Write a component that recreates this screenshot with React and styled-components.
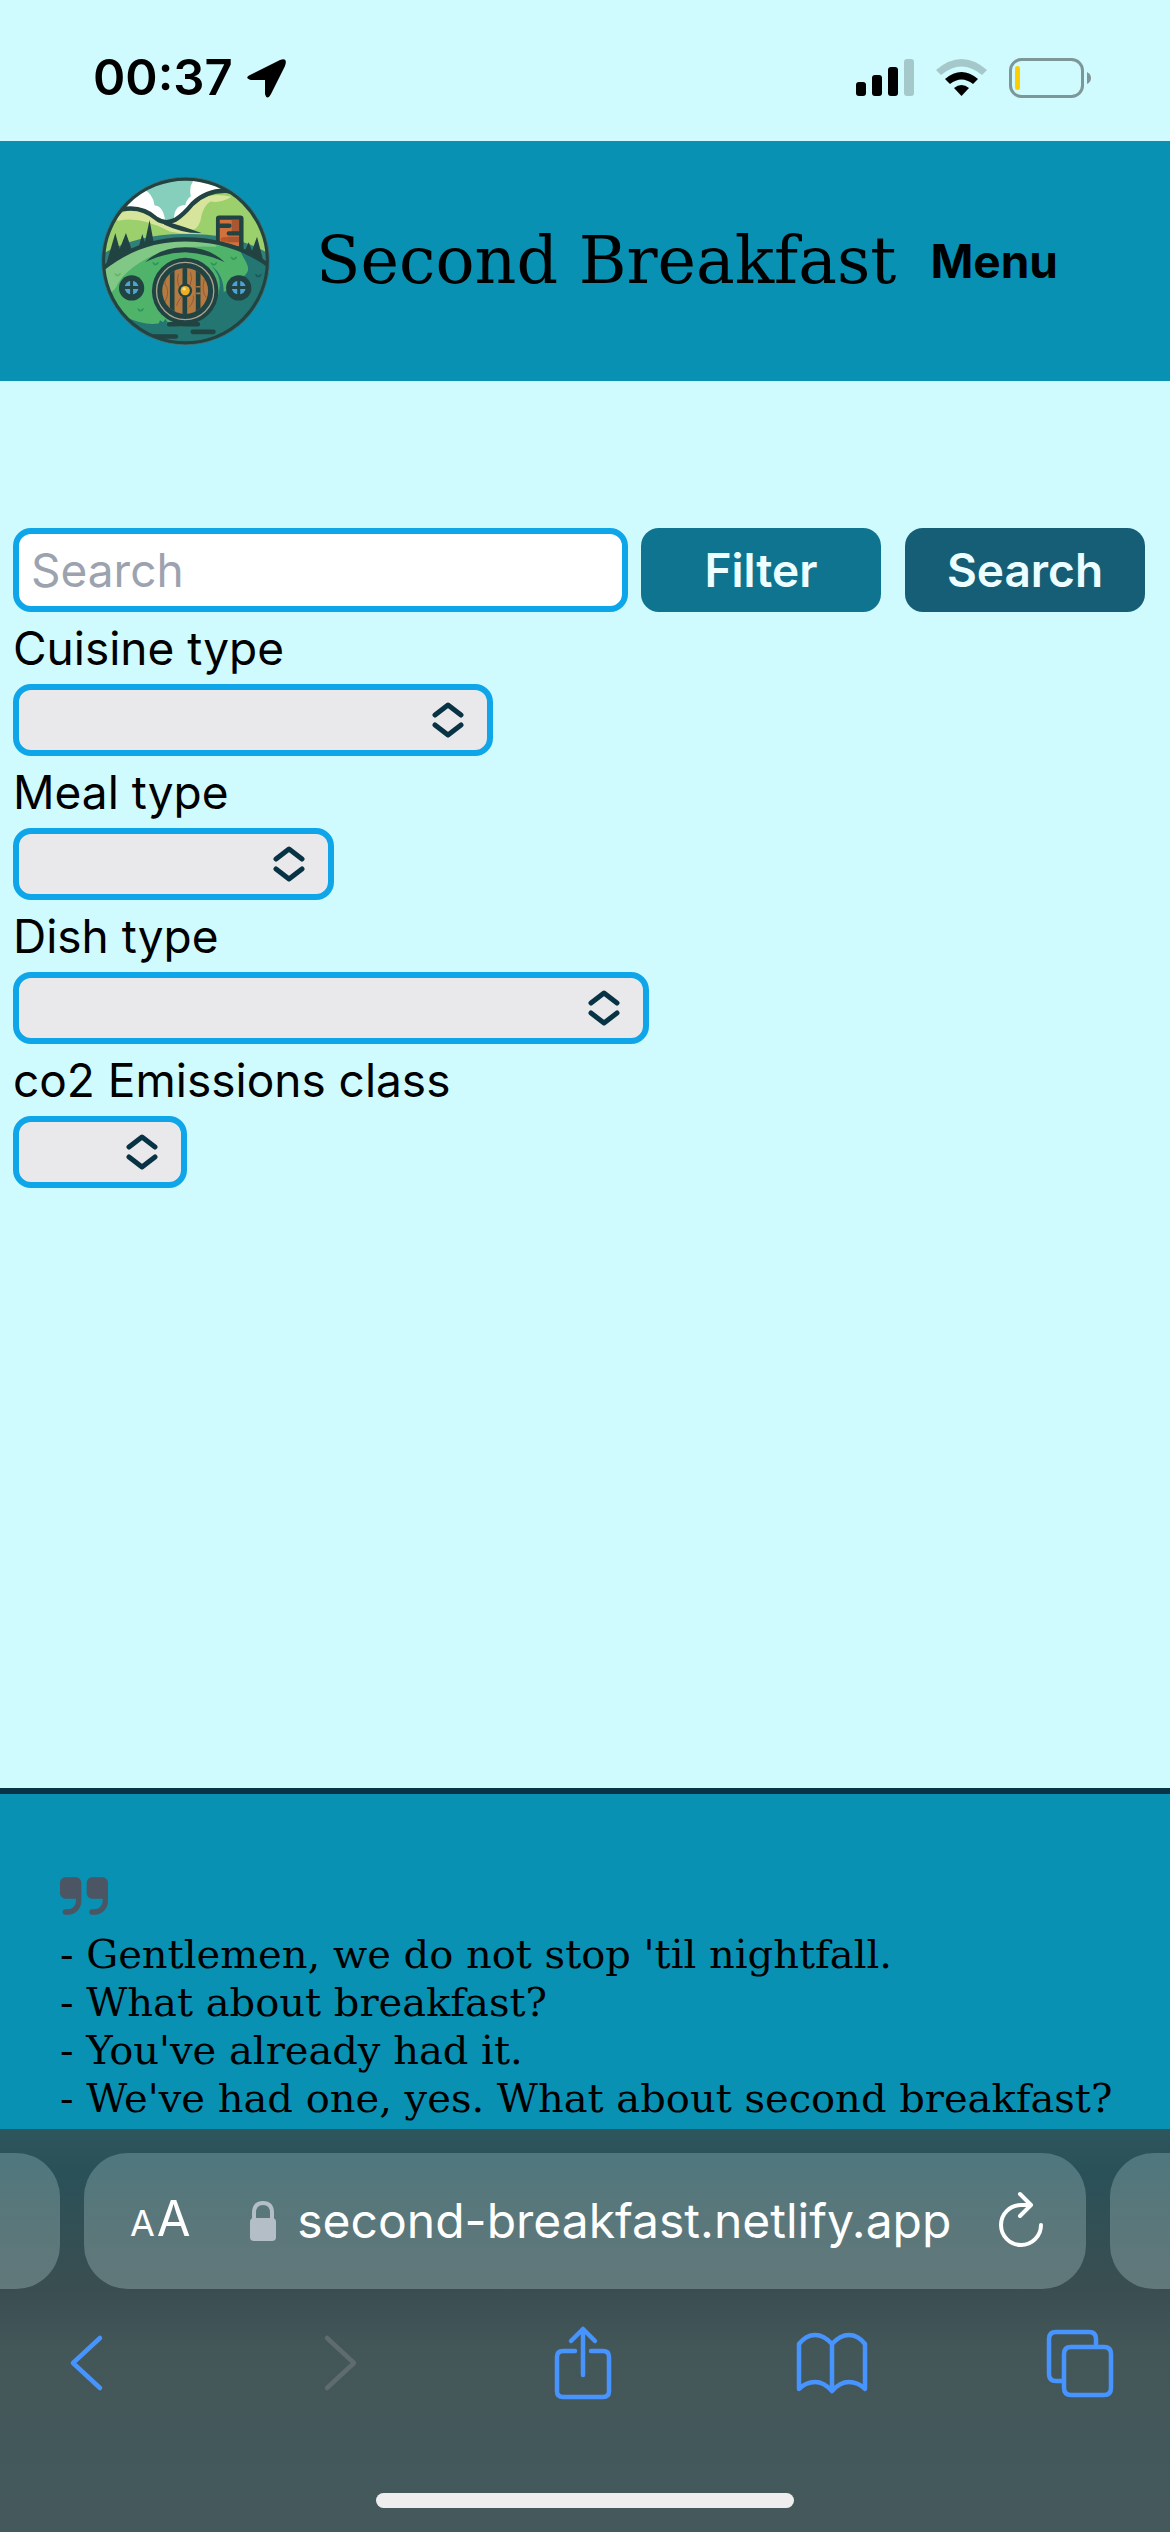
import React from "react";
import styled, { createGlobalStyle } from "styled-components";

const sans = '"Inter", "Liberation Sans", sans-serif';
const script = '"DejaVu Serif", serif';

const GlobalStyle = createGlobalStyle`
  *, *::before, *::after { box-sizing: border-box; }
  body { margin: 0; background: #cffafe; font-family: ${sans}; color: #000; }
  svg { display: block; flex: none; }
  button, input, select { font: inherit; margin: 0; }
  button { border: 0; background: none; padding: 0; cursor: pointer; }
`;

const Page = styled.div`
  display: flex;
  flex-direction: column;
  min-height: 100vh;
  overflow: hidden;
`;

const StatusBar = styled.div`
  display: flex;
  align-items: center;
  justify-content: space-between;
  height: 141px;
  padding: 15px 78px 0 93px;
`;

const StatusGroup = styled.div`
  display: flex;
  align-items: center;
  gap: ${(p) => p.$gap}px;
`;

const Clock = styled.time`
  font-size: 49px;
  line-height: 60px;
  font-weight: 600;
`;

const Header = styled.header`
  display: flex;
  align-items: center;
  justify-content: space-between;
  height: 240px;
  padding: 0 112px 0 101px;
  background: #0891b2;
`;

const Brand = styled.a`
  display: flex;
  align-items: center;
  gap: 46px;
  color: inherit;
  text-decoration: none;
`;

const Title = styled.h1`
  margin: 0;
  font-family: ${script};
  font-size: 65px;
  line-height: 72px;
  font-weight: 400;
  white-space: nowrap;
`;

const MenuButton = styled.button`
  font-size: 46px;
  line-height: 72px;
  font-weight: 700;
`;

const Main = styled.main`
  flex: 1;
  padding: 147px 25px 48px 13px;
`;

const SearchRow = styled.div`
  display: flex;
  gap: 24px;
`;

const SearchField = styled.input`
  flex: 1;
  min-width: 0;
  height: 84px;
  margin-right: -11px;
  padding: 0 12px;
  border: 6px solid #0ea5e9;
  border-radius: 18px;
  background: #fff;
  font-size: 46px;
  line-height: 72px;
  outline: 0;
  &::placeholder { color: #9ca3af; opacity: 1; }
`;

const ActionButton = styled.button`
  width: 240px;
  height: 84px;
  border-radius: 18px;
  background: ${(p) => (p.$strong ? "#155e75" : "#0e7490")};
  color: #ecfeff;
  font-size: 46px;
  line-height: 72px;
  font-weight: 600;
`;

const Field = styled.div`
  display: flex;
  flex-direction: column;
  align-items: flex-start;
`;

const FieldLabel = styled.label`
  font-size: 46px;
  line-height: 72px;
`;

const SelectBox = styled.div`
  display: grid;
  align-items: center;
  width: ${(p) => p.$width}px;
  max-width: 100%;
  & > * { grid-area: 1 / 1; }
  & > svg { justify-self: end; margin-right: 29px; pointer-events: none; }
`;

const Select = styled.select`
  appearance: none;
  width: 100%;
  height: 72px;
  padding: 0 72px 0 12px;
  border: 6px solid #0ea5e9;
  border-radius: 18px;
  background: #e9e9eb;
  color: #083344;
`;

const Footer = styled.footer`
  height: 341px;
  padding: 83px 60px 0;
  border-top: 6px solid #083344;
  background: #0891b2;
  overflow: hidden;
`;

const Quote = styled.blockquote`
  margin: 15px 0 0;
  font-family: ${script};
  font-size: 40px;
  line-height: 48px;
  white-space: nowrap;
`;

const QuoteLine = styled.p`
  margin: 0;
`;

const BrowserBar = styled.div`
  display: flex;
  flex-direction: column;
  height: 403px;
  padding-top: 24px;
  background: linear-gradient(#2e565d 0, #2a5158 40px, #3a4e51 160px, #435759 220px, #44595b 100%);
`;

const TabStrip = styled.div`
  display: flex;
  gap: 24px;
  height: 136px;
`;

const tabFill = "linear-gradient(#4f777e, #5a777b 50%, #62787a)";

const TabStub = styled.div`
  width: 60px;
  background: ${tabFill};
  border-radius: ${(p) => (p.$side === "left" ? "0 44px 44px 0" : "44px 0 0 44px")};
`;

const AddressBar = styled.div`
  flex: 1;
  display: flex;
  align-items: center;
  padding: 0 42px 0 46px;
  border-radius: 44px;
  background: ${tabFill};
  color: #fff;
`;

const TextSize = styled.button`
  display: flex;
  align-items: baseline;
  gap: 2px;
  color: #fff;
  line-height: 60px;
`;

const Letter = styled.span`
  font-size: ${(p) => (p.$big ? 49 : 36)}px;
`;

const Address = styled.div`
  flex: 1;
  display: flex;
  align-items: center;
  justify-content: center;
  gap: 20px;
  padding-left: 12px;
  font-size: 48px;
  line-height: 60px;
  white-space: nowrap;
`;

const Toolbar = styled.nav`
  display: flex;
  align-items: center;
  justify-content: space-between;
  height: 84px;
  margin-top: 32px;
  padding: 0 53px 0 49px;
  color: #4794ff;
`;

const IconButton = styled.button`
  color: inherit;
`;

const Tool = styled(IconButton)`
  display: flex;
  justify-content: center;
  width: 74px;
  &:disabled { color: #5e6c6e; }
`;

const HomeIndicator = styled.div`
  width: 418px;
  height: 15px;
  margin: auto auto 24px;
  border-radius: 8px;
  background: #eee;
`;

const LocationArrow = () => (
  <svg width="40" height="40" viewBox="0 0 40 40" aria-hidden="true">
    <path d="M3 17 33 2Q41-1 38 8L24 36Q20 43 18 36V22H4Q-3 20 3 17Z" />
  </svg>
);

const Signal = () => (
  <svg width="58" height="38" viewBox="0 0 58 38" aria-hidden="true">
    <rect y="23" width="10" height="14" rx="3" />
    <rect x="16" y="16" width="10" height="21" rx="3" />
    <rect x="32" y="8" width="10" height="29" rx="3" />
    <rect x="48" width="10" height="37" rx="3" fill="#a5c8cb" />
  </svg>
);

const Wifi = () => (
  <svg width="51" height="38" viewBox="0 0 51 38" aria-hidden="true">
    <path d="M0 11Q25.500-11 51 11L46 16Q25.500-1 5 16Z" fill="#a5c8cb" />
    <path d="M9 20Q25.500 6 42 20L37 25Q25.500 16 14 25Z" />
    <path d="M18 29Q25.500 23 33 29L25.500 37Z" />
  </svg>
);

const Battery = () => (
  <svg width="83" height="40" viewBox="0 0 83 40" aria-hidden="true">
    <rect x="1.500" y="1.500" width="72" height="37" rx="11" fill="none" stroke="#7d9698" strokeWidth="3" />
    <rect x="6" y="8" width="5" height="24" rx="2.500" fill="#ffcc00" />
    <path d="M78 14Q82 16 82 20T78 26Z" fill="#7d9698" />
  </svg>
);

const Tuft = ({ x, y, c = "#2d9558" }) => (
  <path d={`M${x - 10} ${y - 6}Q${x - 8} ${y + 5} ${x} ${y + 5}Q${x + 9} ${y + 4} ${x + 10} ${y - 6}Q${x + 2} ${y - 4} ${x} ${y + 1}Q${x - 3} ${y - 4} ${x - 10} ${y - 6}`} fill={c} />
);

const RoundWindow = ({ x }) => (
  <g>
    <circle cx={x} cy="372" r="38" fill="#214342" />
    <circle cx={x} cy="371" r="21" fill="#4aa5d6" />
    <path d={`M${x} 346v50M${x - 25} 371h50`} stroke="#214342" strokeWidth="9" />
  </g>
);

const Logo = () => (
  <svg width="169" height="170" viewBox="33 36 508 510" role="img" aria-label="Round green door in a hillside">
    <defs>
      <clipPath id="scene"><circle cx="287" cy="291" r="250" /></clipPath>
      <clipPath id="door"><circle cx="286" cy="381" r="69" /></clipPath>
    </defs>
    <g clipPath="url(#scene)">
      <path d="M33 36h508v510H33z" fill="#86cfbd" />
      <path d="M90 135 160 75Q190 88 194 124Q220 125 226 170H150L90 145Z" fill="#fff" />
      <path d="M310 50Q297 70 303 96Q287 108 287 123Q252 123 252 168L330 120 410 60V30Z" fill="#fff" />
      <path d="M30 150Q120 120 170 145Q225 170 330 207V290H30Z" fill="#9bd06c" />
      <path d="M70 165Q110 125 165 145Q240 185 330 207Q290 213 240 202Q150 155 85 170Z" fill="#d7e49c" />
      <path d="M235 180Q275 158 310 120Q370 68 450 95L550 240V300H330V207Z" fill="#9bd06c" />
      <path d="M240 180Q290 145 320 112Q360 82 425 98Q395 118 362 112Q338 125 332 170Q320 203 300 196Z" fill="#d7e49c" />
      <path d="M95 136Q155 124 200 164Q225 182 255 168Q280 153 307 120Q350 78 410 80Q440 85 465 100" fill="none" stroke="#214342" strokeWidth="13" />
      <path d="M225 171Q280 187 335 207Q280 209 222 181Z" fill="#214342" />
      <path d="M36 270Q150 208 286 210Q435 208 540 270V340H36Z" fill="#327f7a" />
      <path d="M48 303 76 207 89 255 108 207 128 265 145 255 157 210 165 235 179 168 194 250Z" fill="#214342" />
      <path d="M456 280 477 235 487 260 502 218 522 295 537 300V330Z" fill="#214342" />
      <rect x="383" y="159" width="74" height="104" rx="5" fill="#214342" stroke="#214342" strokeWidth="9" />
      <path d="M390 167h58v80H390z" fill="#d1713e" />
      <path d="M426 167h22v38H426zM412 218h36v17H412z" fill="#a95632" />
      <path d="M388 185h31M417 208h32" stroke="#214342" strokeWidth="13" strokeLinecap="round" />
      <ellipse cx="405" cy="226" rx="12" ry="7" fill="#b65629" />
      <path d="M390 235 430 243 448 248V269L390 244Z" fill="#214342" />
      <path d="M36 315Q150 230 286 228Q430 230 540 305V546H36Z" fill="#4fb46a" />
      <path d="M44 306Q160 233 290 232Q360 232 405 251Q285 238 190 274Q100 318 77 372L50 400Z" fill="#81c886" />
      <path d="M450 260Q480 320 465 335Q420 325 410 380L402 385Q401 330 365 306Q420 360 355 450Q290 510 220 475Q175 492 95 455L150 530 290 545 450 520 540 400V303Z" fill="#237671" />
      <path d="M360 300Q405 320 408 380L417 380Q420 335 460 335Q485 325 469 294L450 260 380 244Z" fill="#4fb46a" />
      <path d="M38 314Q150 225 286 226Q428 226 537 304" fill="none" stroke="#214342" strokeWidth="13" />
      <path d="M166 295Q210 250 286 250Q360 250 405 295Q350 268 286 265Q220 267 166 295Z" fill="#214342" />
      <Tuft x={197} y={299} /><Tuft x={372} y={300} /><Tuft x={432} y={283} />
      <Tuft x={152} y={438} /><Tuft x={83} y={332} c="#63b764" /><Tuft x={506} y={335} c="#195958" />
      <path d="M206 483 210 469 220 475 226 465 236 478Z" fill="#237671" />
      <RoundWindow x={125} />
      <RoundWindow x={447} />
      <path d="M238 481h86M309 504h62M175 518h83" stroke="#214342" strokeWidth="14" strokeLinecap="round" />
    </g>
    <circle cx="286" cy="381" r="100" fill="#214342" />
    <circle cx="286" cy="381" r="86" fill="none" stroke="#aaa391" strokeWidth="4" />
    <g clipPath="url(#door)">
      <path d="M215 310h142v142H215z" fill="#b57942" />
      <path d="M230 335Q219 355 231 370Q238 390 225 415M266 330Q258 355 272 375M260 425Q270 400 277 400M302 325Q310 345 300 365M298 430Q315 410 310 395M343 345Q335 385 349 400" fill="none" stroke="#925b34" strokeWidth="3" />
      <path d="M247 310v142M285 310v142M325 310v142" stroke="#214342" strokeWidth="14" />
      <path d="M319 366h13v5h-13zM319 386h13v5h-13z" fill="#b57942" />
    </g>
    <circle cx="286" cy="380" r="21" fill="#214342" />
    <circle cx="286" cy="380" r="14" fill="#edae28" />
    <circle cx="283" cy="375" r="5" fill="#ffe178" />
    <circle cx="287" cy="291" r="247" fill="none" stroke="#214342" strokeWidth="11" />
    <circle cx="287" cy="291" r="252" fill="none" stroke="#517d80" strokeWidth="2" />
  </svg>
);

const UpDown = () => (
  <svg width="32" height="36" viewBox="0 0 32 36" fill="none" stroke="#083344" strokeWidth="5" strokeLinecap="round" strokeLinejoin="round" aria-hidden="true">
    <path d="M3 13 16 3 29 13M3 23 16 33 29 23" />
  </svg>
);

const QuoteMark = () => (
  <svg width="48" height="38" viewBox="0 0 18 14" fill="#4b5563" aria-hidden="true">
    <path d="M6 0H2a2 2 0 0 0-2 2v4a2 2 0 0 0 2 2h4v1a3 3 0 0 1-3 3H2a1 1 0 0 0 0 2h1a5 5 0 0 0 5-5V2a2 2 0 0 0-2-2Zm10 0h-4a2 2 0 0 0-2 2v4a2 2 0 0 0 2 2h4v1a3 3 0 0 1-3 3h-1a1 1 0 0 0 0 2h1a5 5 0 0 0 5-5V2a2 2 0 0 0-2-2Z" />
  </svg>
);

const Lock = () => (
  <svg width="28" height="40" viewBox="0 0 28 40" aria-hidden="true">
    <path d="M5 19V12Q5 2 14 2T23 12V19" fill="none" stroke="#b3bec6" strokeWidth="4" />
    <rect x="1" y="17" width="26" height="23" rx="4" fill="#b3bec6" />
  </svg>
);

const Reload = () => (
  <svg width="46" height="60" viewBox="0 0 46 60" fill="none" stroke="#fff" strokeWidth="4" strokeLinecap="round" strokeLinejoin="round" aria-hidden="true">
    <path d="M22 3 33 14 22 25M32 14H23A20 20 0 1 0 43 34" />
  </svg>
);

const Line = ({ w, h, d }) => (
  <svg width={w} height={h} viewBox={`0 0 ${w} ${h}`} fill="none" stroke="currentColor" strokeWidth="4.500" strokeLinecap="round" strokeLinejoin="round" aria-hidden="true">
    <path d={d} />
  </svg>
);

const filters = [
  { id: "cuisine", label: "Cuisine type", width: 480 },
  { id: "meal", label: "Meal type", width: 321 },
  { id: "dish", label: "Dish type", width: 636 },
  { id: "emissions", label: "co2 Emissions class", width: 174 },
];

const quoteLines = [
  "- Gentlemen, we do not stop 'til nightfall.",
  "- What about breakfast?",
  "- You've already had it.",
  "- We've had one, yes. What about second breakfast?",
];

const tools = [
  { label: "Back", w: 36, h: 60, d: "M32 5 5 30 32 55" },
  { label: "Forward", w: 48, h: 60, d: "M16 5 43 30 16 55", disabled: true },
  { label: "Share", w: 60, h: 76, d: "M22 26H10Q4 26 4 32V66Q4 72 10 72H50Q56 72 56 66V32Q56 26 50 26H38M30 50V4M18 16 30 4 42 16" },
  { label: "Bookmarks", w: 74, h: 64, d: "M37 13Q29 4 20 4T4 13V58Q11 51 20 51T37 60Q45 51 54 51T70 58V13Q63 4 54 4T37 13V59" },
  { label: "Tabs", w: 70, h: 70, d: "M18 53H11Q4 53 4 46V11Q4 4 11 4H44Q51 4 51 11V18M26 19H59Q66 19 66 26V60Q66 67 59 67H26Q19 67 19 60V26Q19 19 26 19Z" },
];

export default function App() {
  return (
    <>
      <GlobalStyle />
      <Page>
        <StatusBar>
          <StatusGroup $gap={14}>
            <Clock>00:37</Clock>
            <LocationArrow />
          </StatusGroup>
          <StatusGroup $gap={22}>
            <Signal />
            <Wifi />
            <Battery />
          </StatusGroup>
        </StatusBar>

        <Header>
          <Brand href="#">
            <Logo />
            <Title>Second Breakfast</Title>
          </Brand>
          <MenuButton type="button">Menu</MenuButton>
        </Header>

        <Main>
          <SearchRow>
            <SearchField type="text" placeholder="Search" aria-label="Search" />
            <ActionButton type="button">Filter</ActionButton>
            <ActionButton type="button" $strong>Search</ActionButton>
          </SearchRow>
          {filters.map((f) => (
            <Field key={f.id}>
              <FieldLabel htmlFor={f.id}>{f.label}</FieldLabel>
              <SelectBox $width={f.width}>
                <Select id={f.id} />
                <UpDown />
              </SelectBox>
            </Field>
          ))}
        </Main>

        <Footer>
          <QuoteMark />
          <Quote>
            {quoteLines.map((line) => (
              <QuoteLine key={line}>{line}</QuoteLine>
            ))}
          </Quote>
        </Footer>

        <BrowserBar>
          <TabStrip>
            <TabStub $side="left" />
            <AddressBar>
              <TextSize type="button" aria-label="Text size">
                <Letter>A</Letter>
                <Letter $big>A</Letter>
              </TextSize>
              <Address>
                <Lock />
                <span>second-breakfast.netlify.app</span>
              </Address>
              <IconButton type="button" aria-label="Reload">
                <Reload />
              </IconButton>
            </AddressBar>
            <TabStub $side="right" />
          </TabStrip>
          <Toolbar aria-label="Browser">
            {tools.map((t) => (
              <Tool key={t.label} type="button" aria-label={t.label} disabled={t.disabled}>
                <Line w={t.w} h={t.h} d={t.d} />
              </Tool>
            ))}
          </Toolbar>
          <HomeIndicator />
        </BrowserBar>
      </Page>
    </>
  );
}
